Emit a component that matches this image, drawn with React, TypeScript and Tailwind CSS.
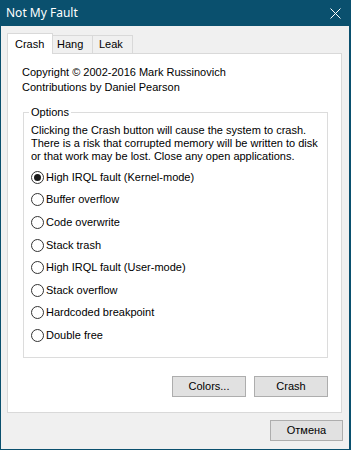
import React from "react";

const radios = [
  "High IRQL fault (Kernel-mode)",
  "Buffer overflow",
  "Code overwrite",
  "Stack trash",
  "High IRQL fault (User-mode)",
  "Stack overflow",
  "Hardcoded breakpoint",
  "Double free",
];

function Radio({ checked, label }: { checked?: boolean; label: string }) {
  return (
    <div className="h-[22.6px] flex items-center">
      <div className="w-[13px] h-[13px] rounded-full border border-[#333333] bg-white flex items-center justify-center shrink-0">
        {checked && <div className="w-[7px] h-[7px] rounded-full bg-[#1a1a1a]" />}
      </div>
      <span className="ml-[2px] leading-[13px]">{label}</span>
    </div>
  );
}

export default function App() {
  return (
    <div
      className="w-[351px] h-[450px] bg-[#0a506e] flex flex-col text-[11px] text-black"
      style={{ fontFamily: '"Liberation Sans", Arial, sans-serif' }}
    >
      <div className="h-[26px] shrink-0 flex items-center justify-between pl-[6px] pr-[10px]">
        <span
          className="text-white text-[12px] leading-none"
          style={{ fontFamily: '"Noto Sans", "Open Sans", sans-serif' }}
        >
          Not My Fault
        </span>
        <svg width="11" height="11" viewBox="0 0 11 11" className="mr-[0px]">
          <path d="M0.5 0.5 L10.5 10.5 M10.5 0.5 L0.5 10.5" stroke="white" strokeWidth="1" />
        </svg>
      </div>
      <div className="flex-1 ml-px mr-[2px] mb-px bg-[#f0f0f0] flex flex-col pt-[7px] pl-[6px] pr-[7px]">
        <div className="h-[20px] flex items-end relative z-10">
          <div className="h-[21px] -mb-px w-[46px] bg-white border border-b-0 border-[#d9d9d9] pl-[7px] flex items-center leading-none">
            Crash
          </div>
          <div className="h-[18px] w-[40px] border-t border-r border-[#d9d9d9] pl-[4px] flex items-center leading-none">
            Hang
          </div>
          <div className="h-[18px] w-[40px] border-t border-r border-[#d9d9d9] pl-[6px] flex items-center leading-none">
            Leak
          </div>
        </div>
        <div className="h-[360px] bg-white border border-[#d9d9d9] flex flex-col pt-[11px] pl-[14px] pr-[13px] pb-[15px]">
          <div className="leading-[15px]">Copyright © 2002-2016 Mark Russinovich</div>
          <div className="leading-[15px]">Contributions by Daniel Pearson</div>
          <div className="relative mt-[17px] ml-px h-[246px] border border-[#dcdcdc] pt-[11px] pl-[7px] flex flex-col">
            <span className="absolute -top-[7px] left-[5px] bg-white px-[2px] leading-[13px]">Options</span>
            <div className="leading-[13px]">
              Clicking the Crash button will cause the system to crash.
              <br />
              There is a risk that corrupted memory will be written to disk
              <br />
              or that work may be lost. Close any open applications.
            </div>
            <div className="mt-[3px] flex flex-col">
              {radios.map((r, i) => (
                <Radio key={r} label={r} checked={i === 0} />
              ))}
            </div>
          </div>
          <div className="mt-[18px] flex justify-end gap-[8px]">
            <div className="w-[74px] h-[21px] bg-[#e1e1e1] border border-[#adadad] flex items-center justify-center">
              Colors...
            </div>
            <div className="w-[74px] h-[21px] bg-[#e1e1e1] border border-[#adadad] flex items-center justify-center">
              Crash
            </div>
          </div>
        </div>
        <div className="mt-[7px] flex justify-end -mr-px">
          <div className="w-[73px] h-[21px] bg-[#e1e1e1] border border-[#adadad] flex items-center justify-center">
            Отмена
          </div>
        </div>
      </div>
    </div>
  );
}
